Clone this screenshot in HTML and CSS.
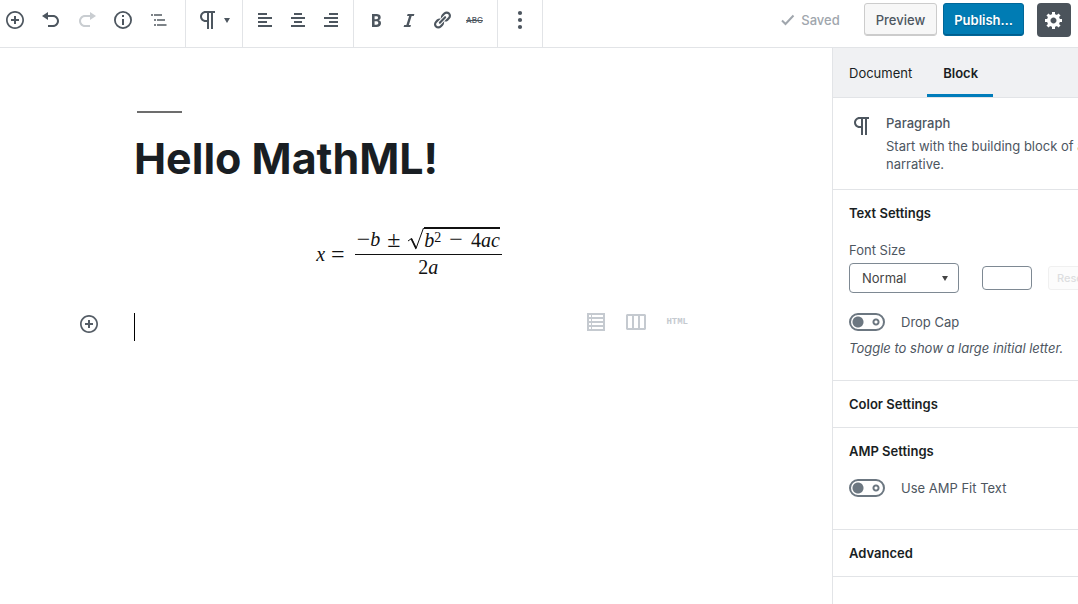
FILE: index.html
```html
<!DOCTYPE html>
<html lang="en">
<head>
<meta charset="utf-8">
<meta name="viewport" content="width=device-width, initial-scale=1">
<title>Hello MathML!</title>
<link rel="stylesheet" href="styles.css">
</head>
<body>
<svg class="sprite" aria-hidden="true">
  <symbol id="insert" viewBox="0 0 20 20"><path d="M10 1c-5 0-9 4-9 9s4 9 9 9 9-4 9-9-4-9-9-9zm0 16.300c-4 0-7.300-3.300-7.300-7.300S6 2.700 10 2.700s7.300 3.300 7.300 7.300-3.300 7.300-7.300 7.300zM11 6H9v3H6v2h3v3h2v-3h3V9h-3V6z"/></symbol>
  <symbol id="paragraph" viewBox="0 0 24 24"><path d="M11 5v7H9.500C7.600 12 6 10.400 6 8.500S7.600 5 9.500 5H11m8-2H9.500C6.500 3 4 5.500 4 8.500S6.500 14 9.500 14H11v7h2V5h2v16h2V5h2V3z"/></symbol>
</svg>
<header class="topbar">
  <div class="group group-main">
    <button class="tool" aria-label="Add block"><svg class="icon"><use href="#insert"/></svg></button>
    <button class="tool" aria-label="Undo"><svg class="icon" viewBox="0 0 20 20"><path d="M12 5H7V2L1 6l6 4V7h5c2.200 0 4 1.800 4 4s-1.800 4-4 4H7v2h5c3.300 0 6-2.700 6-6s-2.700-6-6-6z"/></svg></button>
    <button class="tool" aria-label="Redo" disabled><svg class="icon" viewBox="0 0 20 20"><path d="M8 5h5V2l6 4-6 4V7H8c-2.200 0-4 1.800-4 4s1.800 4 4 4h5v2H8c-3.300 0-6-2.700-6-6s2.700-6 6-6z"/></svg></button>
    <button class="tool" aria-label="Content structure"><svg class="icon" viewBox="0 0 20 20"><circle cx="10" cy="10" r="8.100" fill="none" stroke="currentColor" stroke-width="1.800"/><path d="M9 5h2v2H9zM9 9h2v6H9z"/></svg></button>
    <button class="tool" aria-label="Block navigation"><svg class="icon outline" viewBox="0 0 20 20"><path d="M2 4h2v2H2zM5 4h8v2H5zM5 9h2v2H5zM8 9h8v2H8zM5 14h2v2H5zM8 14h9.500v2H8z"/></svg></button>
  </div>
  <div class="group group-type">
    <button class="type-switch" aria-label="Change block type"><svg class="icon-large"><use href="#paragraph"/></svg><svg class="arrow" viewBox="0 0 6 5"><path d="M0 0h6L3 5z"/></svg></button>
  </div>
  <div class="group group-align">
    <button class="tool wide" aria-label="Align left"><svg class="icon" viewBox="0 0 20 20"><path d="M12 5V3H3v2h9zm5 4V7H3v2h14zm-5 4v-2H3v2h9zm5 4v-2H3v2h14z"/></svg></button>
    <button class="tool wide" aria-label="Align center"><svg class="icon" viewBox="0 0 20 20"><path d="M14 5V3H6v2h8zm3 4V7H3v2h14zm-3 4v-2H6v2h8zm3 4v-2H3v2h14z"/></svg></button>
    <button class="tool wide" aria-label="Align right"><svg class="icon" viewBox="0 0 20 20"><path d="M17 5V3H8v2h9zm0 4V7H3v2h14zm0 4v-2H8v2h9zm0 4v-2H3v2h14z"/></svg></button>
  </div>
  <div class="group group-format">
    <button class="tool wide" aria-label="Bold"><svg class="icon" viewBox="0 0 20 20"><path d="M6 4v13h4.540c1.370 0 2.460-.33 3.260-1 .8-.66 1.200-1.580 1.200-2.770 0-.84-.17-1.510-.51-2.010s-.9-.85-1.670-1.030v-.09c.57-.1 1.020-.4 1.360-.9s.51-1.130.51-1.910c0-1.140-.39-1.980-1.170-2.500C12.750 4.260 11.500 4 9.780 4H6zm2.570 5.150V6.260h1.360c.73 0 1.270.11 1.610.32.34.22.51.58.51 1.070 0 .54-.16.92-.47 1.150s-.82.35-1.510.35h-1.500zm0 2.190h1.600c1.440 0 2.160.53 2.160 1.610 0 .6-.17 1.050-.51 1.340s-.86.43-1.570.43H8.570v-3.380z"/></svg></button>
    <button class="tool wide" aria-label="Italic"><svg class="icon" viewBox="0 0 20 20"><path d="M14.780 6h-2.130l-2.800 9h2.120l-.62 2H4.600l.62-2h2.140l2.800-9H8.030l.62-2h6.750z"/></svg></button>
    <button class="tool wide" aria-label="Link"><svg class="icon" viewBox="0 0 20 20"><path d="M17.740 2.760c1.680 1.690 1.680 4.410 0 6.100l-1.530 1.520c-1.120 1.120-2.700 1.470-4.140 1.090l2.620-2.610.76-.77.76-.76c.84-.84.84-2.200 0-3.040-.84-.85-2.200-.85-3.040 0l-.77.76-3.380 3.380c-.37-1.440-.02-3.020 1.100-4.140l1.520-1.530c1.690-1.680 4.420-1.680 6.100 0zM8.590 13.430l5.340-5.340c.42-.42.42-1.100 0-1.520-.44-.43-1.130-.39-1.530 0l-5.330 5.340c-.42.42-.42 1.100 0 1.520.44.43 1.130.39 1.520 0zm-.76 2.290l4.140-4.150c.38 1.440.03 3.020-1.090 4.140l-1.520 1.530c-1.690 1.680-4.410 1.680-6.100 0-1.680-1.680-1.680-4.420 0-6.100l1.530-1.520c1.120-1.120 2.700-1.470 4.140-1.100l-4.140 4.150c-.85.84-.85 2.200 0 3.050.84.84 2.200.84 3.040 0z"/></svg></button>
    <button class="tool wide strike" aria-label="Strikethrough">ABC</button>
  </div>
  <div class="group group-more">
    <button class="tool wide" aria-label="More options"><svg class="icon" viewBox="0 0 20 20"><circle cx="10" cy="3" r="2.100"/><circle cx="10" cy="10" r="2.100"/><circle cx="10" cy="17" r="2.100"/></svg></button>
  </div>
  <div class="actions">
    <span class="saved"><svg class="check" viewBox="0 0 14 12"><path d="M1 6.500l3.500 3.500L12.500 1.500" fill="none" stroke="currentColor" stroke-width="2"/></svg>Saved</span>
    <button class="btn">Preview</button>
    <button class="btn primary">Publish…</button>
    <button class="gear" aria-label="Settings"><svg class="icon" viewBox="0 0 20 20"><path d="M18 12h-2.180c-.17.7-.44 1.350-.81 1.930l1.540 1.540-2.100 2.100-1.540-1.540c-.58.36-1.230.63-1.910.79V19H8v-2.180c-.68-.16-1.330-.43-1.910-.79l-1.540 1.540-2.120-2.120 1.540-1.540c-.36-.58-.63-1.230-.79-1.910H1V9.030h2.170c.16-.7.44-1.350.8-1.940L2.430 5.550l2.100-2.100 1.540 1.540c.58-.37 1.240-.64 1.930-.81V2h3v2.180c.68.16 1.330.43 1.910.79l1.540-1.540 2.120 2.120-1.540 1.540c.36.59.64 1.240.8 1.940H18V12zm-8.500 1.500c1.660 0 3-1.340 3-3s-1.340-3-3-3-3 1.340-3 3 1.340 3 3 3z"/></svg></button>
  </div>
</header>
<div class="workspace">
  <main class="editor">
    <div class="post">
      <h1 class="title">Hello MathML!</h1>
      <div class="formula" role="math" aria-label="x equals the quadratic formula">
        <i>x</i><span class="op">=</span>
        <div class="fraction">
          <div class="numerator">
            <span class="op">−</span><i>b</i><span class="op pm">±</span>
            <svg class="radical" viewBox="0 0 17 24"><path d="M1 14l3.500-2.500L9 21.500 16.500 1" fill="none" stroke="currentColor" stroke-width="1"/><path d="M3.500 12l1.500-.8 4.500 9-.8 2.300z"/></svg>
            <span class="radicand"><i>b</i><sup>2</sup><span class="op minus">−</span>4<i>ac</i></span>
          </div>
          <div class="denominator">2<i>a</i></div>
        </div>
      </div>
    </div>
    <div class="new-block">
      <button class="tool" aria-label="Add block here"><svg class="icon"><use href="#insert"/></svg></button>
      <span class="caret"></span>
      <div class="shortcuts">
        <button class="shortcut" aria-label="Add table"><svg class="icon" viewBox="0 0 20 20"><path fill-rule="evenodd" d="M1 1h18v18H1zM3 3v2h2V3zM6 3v2h11V3zM3 7v2h2V7zM6 7v2h11V7zM3 11v2h2v-2zM6 11v2h11v-2zM3 15v2h2v-2zM6 15v2h11v-2z"/></svg></button>
        <button class="shortcut" aria-label="Add columns"><svg class="icon" viewBox="0 0 20 20"><path fill-rule="evenodd" d="M1 2h18l1 1v14l-1 1H1l-1-1V3zM2 4v12h4V4zM8 4v12h4V4zM14 4v12h4V4z"/></svg></button>
        <button class="shortcut html">HTML</button>
      </div>
    </div>
  </main>
  <aside class="sidebar">
    <div class="panel">
      <nav class="tabs"><button class="tab">Document</button><button class="tab active">Block</button></nav>
      <section class="card">
        <svg class="icon-large"><use href="#paragraph"/></svg>
        <div><h2 class="card-title">Paragraph</h2><p class="card-text">Start with the building block of all narrative.</p></div>
      </section>
      <section class="section text-settings">
        <h2 class="section-title">Text Settings</h2>
        <label class="label" for="font-size">Font Size</label>
        <div class="size-row">
          <div class="select-wrap"><select class="select" id="font-size"><option>Normal</option></select><svg class="arrow" viewBox="0 0 6 5"><path d="M0 0h6L3 5z"/></svg></div>
          <input class="number" type="text" aria-label="Custom size">
          <button class="reset" disabled>Reset</button>
        </div>
        <label class="toggle-row"><input class="toggle" type="checkbox">Drop Cap</label>
        <p class="help">Toggle to show a large initial letter.</p>
      </section>
      <section class="section"><h2 class="section-title">Color Settings</h2></section>
      <section class="section amp">
        <h2 class="section-title">AMP Settings</h2>
        <label class="toggle-row"><input class="toggle" type="checkbox">Use AMP Fit Text</label>
      </section>
      <section class="section"><h2 class="section-title">Advanced</h2></section>
    </div>
  </aside>
</div>
</body>
</html>
```
FILE: styles.css
```css
* { box-sizing: border-box; }
body {
  margin: 0;
  min-height: 100vh;
  display: flex;
  flex-direction: column;
  overflow-x: hidden;
  background: #fff;
  color: #4d565f;
  font: 13px/18px Inter, "Liberation Sans", sans-serif;
}
button, input, select { font: inherit; color: inherit; margin: 0; }
button { border: 0; padding: 0; background: none; }
svg { fill: currentColor; flex: none; }
h1, h2, p { margin: 0; }
.sprite { display: none; }
.icon { display: block; width: 20px; height: 20px; }
.icon-large { display: block; width: 24px; height: 24px; }
.arrow { width: 6px; height: 5px; }

.topbar { display: flex; height: 48px; border-bottom: 1px solid #e2e4e7; }
.group { display: flex; padding-bottom: 7px; border-right: 1px solid #e2e4e7; }
.group-main { gap: 6px; padding-right: 11px; }
.group-type { padding-left: 10px; padding-right: 12px; }
.group-align,
.group-format,
.group-more { padding-left: 5px; padding-right: 6px; }
.tool { display: flex; align-items: center; justify-content: center; width: 30px; }
.tool.wide { width: 33px; }
.tool:disabled { color: #c9cdd1; }
.outline { color: #7d8388; }
.type-switch { display: flex; align-items: center; gap: 4px; }
.strike { font-size: 8px; font-weight: 500; text-decoration: line-through; }
.actions { display: flex; align-items: flex-start; margin-left: auto; padding: 3px 7px 0 0; }
.saved { display: flex; align-items: center; gap: 6px; height: 34px; margin-right: 24px; color: #a0a6ad; font-weight: 500; }
.check { width: 14px; height: 12px; }
.btn {
  height: 33px;
  padding: 0 11px;
  margin-right: 6px;
  border: 1px solid #ccc;
  border-radius: 3px;
  background: #f7f7f7;
  box-shadow: inset 0 -1px 0 #ccc;
  font-weight: 500;
}
.primary {
  margin-right: 13px;
  padding: 0 10px;
  border-color: #006799;
  background: #007cb4;
  box-shadow: inset 0 -1px 0 #005d8c;
  color: #fff;
  font-weight: 600;
  text-shadow: 0 1px 1px #005d8c;
}
.gear { display: flex; align-items: center; justify-content: center; width: 34px; height: 34px; border-radius: 4px; background: #4b535b; color: #fff; }

.workspace { flex: 1; display: flex; }
.editor { flex: 1; min-width: 0; padding-top: 63px; color: #191e23; }
.post { padding: 0 148px 0 134px; }
.title { font-size: 43px; line-height: 52px; font-weight: 700; }
.title::before { content: ""; display: block; width: 45px; height: 2px; margin: 0 0 19px 3px; background: #6d6d6d; }
.formula {
  display: flex;
  align-items: center;
  justify-content: center;
  gap: 6px;
  margin-top: 39px;
  color: #111;
  font: 20px/24px "Liberation Serif", serif;
}
.op { font-size: 24px; }
.fraction { display: flex; flex-direction: column; margin-left: 4px; text-align: center; }
.numerator { display: flex; align-items: center; padding: 0 2px; height: 32px; border-bottom: 1px solid; }
.denominator { padding-bottom: 6px; }
.pm { padding: 0 7px; }
.radical { width: 17px; height: 24px; }
.radicand { border-top: 2px solid; height: 24px; line-height: 22px; white-space: nowrap; }
.radicand sup { font-size: 14px; line-height: 0; vertical-align: 5px; }
.minus { padding: 0 8px; line-height: 0; }
.new-block { display: flex; align-items: flex-start; margin-top: 27px; padding: 0 144px 0 74px; }
.new-block .tool { margin-top: 2px; color: #555d66; }
.caret { width: 1px; height: 28px; margin: 1px 0 0 30px; background: #000; }
.shortcuts { display: flex; align-items: center; gap: 20px; margin-left: auto; color: #c5cad0; }
.html { font: bold 9px/12px "Liberation Mono", monospace; }

.sidebar { width: 246px; overflow: hidden; border-left: 1px solid #e2e4e7; }
.panel { width: 279px; }
.tabs { display: flex; height: 50px; background: #f0f1f3; border-bottom: 1px solid #e2e4e7; color: #191e23; }
.tab { padding: 4px 15px 0 16px; border-bottom: 3px solid transparent; }
.tab.active { border-color: #007cba; font-weight: 600; }
.card { display: flex; gap: 12px; padding: 16px 16px 16px 17px; border-bottom: 1px solid #e2e4e7; }
.card-title { margin-bottom: 5px; font-size: 13px; line-height: 18px; font-weight: 500; }
.section { padding: 14px 16px; border-bottom: 1px solid #e2e4e7; }
.section-title { color: #191e23; font-size: 13px; line-height: 18px; font-weight: 600; }
.label { display: block; margin-top: 19px; }
.size-row { display: flex; align-items: center; margin: 4px 0 20px; }
.select-wrap { display: grid; align-items: center; width: 110px; margin-right: 23px; }
.select-wrap > * { grid-area: 1 / 1; }
.select-wrap .arrow { justify-self: end; margin-right: 11px; pointer-events: none; color: #444; }
.select { appearance: none; width: 100%; height: 30px; padding: 0 12px; border: 1px solid #7e8993; border-radius: 4px; background: #fff; color: #444; }
.number { width: 50px; height: 24px; margin-right: 16px; border: 1px solid #7e8993; border-radius: 4px; background: #fff; }
.reset { height: 24px; padding: 0 8px; border: 1px solid #f0f0f0; border-radius: 3px; background: #fcfcfc; color: #dcdee0; font-size: 11px; font-weight: 500; }
.toggle-row { display: flex; align-items: center; gap: 16px; }
.toggle {
  appearance: none;
  width: 36px;
  height: 18px;
  border: 2px solid #6c7781;
  border-radius: 9px;
  background: radial-gradient(circle at 7px 7px, #6c7781 5px, transparent 6px), radial-gradient(circle at 25px 7px, transparent 1px, #6c7781 2px, #6c7781 3px, transparent 4px);
}
.help { margin-top: 8px; font-style: italic; white-space: nowrap; }
.text-settings { padding-bottom: 23px; }
.amp .toggle-row { margin-top: 19px; }
.amp { padding-bottom: 32px; }
```
